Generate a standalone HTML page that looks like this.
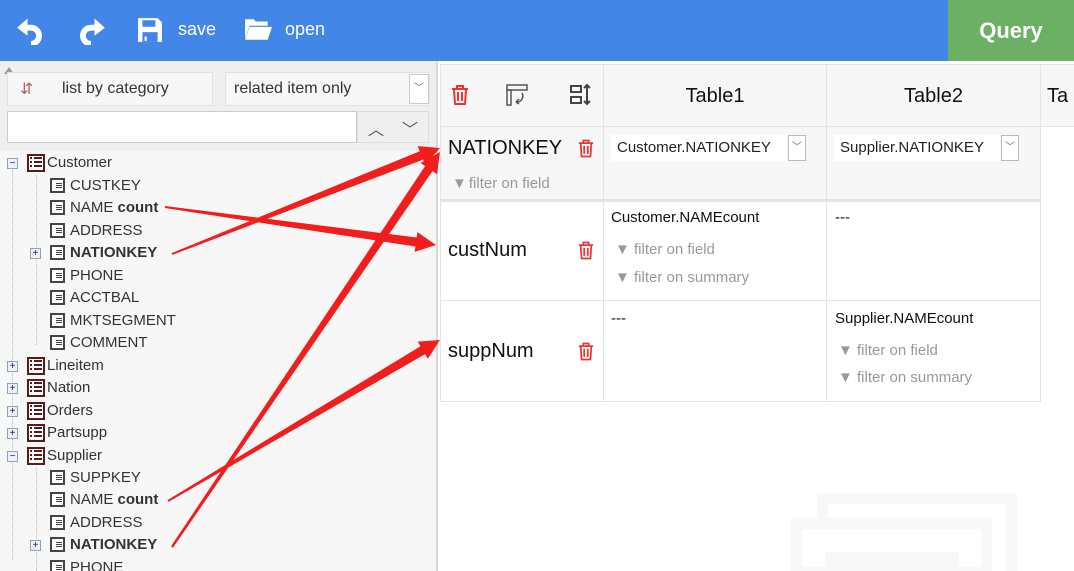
<!DOCTYPE html><html><head><style>
*{box-sizing:border-box;margin:0;padding:0}
html,body{width:1074px;height:571px;overflow:hidden}
body{background:#fff;font-family:"Liberation Sans",sans-serif;position:relative}
.hdr{position:absolute;left:0;top:0;width:1074px;height:61px;background:#4286e8}
.q{position:absolute;left:948px;top:0;width:126px;height:61px;background:#6bb064;color:#fff;font-weight:bold;font-size:22px;text-align:center;line-height:61px}
.ht{position:absolute;color:#fff;font-size:18px;top:19px}
.left{position:absolute;left:0;top:61px;width:438px;height:510px;background:#f7f7f7;border-right:2px solid #d8d8d8}
.lt{position:absolute;left:0;top:0;width:436px;height:90px;background:#efefef}
.box{position:absolute;background:#f7f7f7;border:1px solid #e2e2e2;font-size:16px;color:#333;line-height:32px}
.tr{position:absolute;font-size:15px;color:#333;height:20px;line-height:20px}
.ti{position:absolute;width:18px;height:18px;border:2px solid #5a1a1a;background:#fff}
.ti:before{content:"";position:absolute;left:1px;top:1px;width:12px;height:12px;background:repeating-linear-gradient(#5a1a1a 0 2px,transparent 2px 4px)}
.ti:after{content:"";position:absolute;left:3px;top:0;width:2px;height:14px;background:#fff}
.fi{position:absolute;width:15px;height:15px;border:2px solid #444;background:#fff}
.fi:before{content:"";position:absolute;left:4px;top:3px;width:6px;height:6px;background:repeating-linear-gradient(#444 0 1px,transparent 1px 2px)}
.pm{position:absolute;width:11px;height:11px;border:1px solid #8aa;background:#eef;font-size:10px;line-height:9px;text-align:center;color:#222}
.cell{position:absolute;border-right:1px solid #e4e4e4;border-bottom:1px solid #e4e4e4}
.g{color:#999;font-size:15px;position:absolute}
.sel{position:absolute;background:#fff;font-size:15px;color:#222;height:26px;line-height:26px;padding-left:6px}
.dd{position:absolute;width:18px;height:26px;border:1px solid #bbb;background:#fff;color:#666;font-size:10px;text-align:center;line-height:24px}
</style></head><body>
<div class="hdr"></div>
<svg style="position:absolute;left:16px;top:15px" width="30" height="30" viewBox="0 0 26 26"><path d="M10 3 L1 11 L10 18 Z" fill="#fff"/><path d="M6 11 H13 A7 7 0 0 1 13 25" stroke="#fff" stroke-width="5" fill="none"/></svg>
<svg style="position:absolute;left:76px;top:15px" width="30" height="30" viewBox="0 0 26 26"><path d="M16 3 L25 11 L16 18 Z" fill="#fff"/><path d="M20 11 H13 A7 7 0 0 0 13 25" stroke="#fff" stroke-width="5" fill="none"/></svg>
<svg style="position:absolute;left:137px;top:17px" width="26" height="26" viewBox="0 0 24 24"><path d="M1 1H19L23 5V23H1Z" fill="#fff"/><rect x="5" y="3" width="12" height="6" fill="#4286e8"/><rect x="5" y="14" width="14" height="9" fill="#4286e8"/><rect x="7" y="18" width="2" height="4" fill="#fff"/></svg>
<div class="ht" style="left:178px">save</div>
<svg style="position:absolute;left:244px;top:17px" width="28" height="24" viewBox="0 0 26 22"><path d="M1 2H9L11 4H22V8H5L1 20Z" fill="#fff"/><path d="M5 9H26L22 21H1Z" fill="#fff"/></svg>
<div class="ht" style="left:285px">open</div>
<div class="q">Query</div>

<div class="left">
<div class="lt">
<div style="position:absolute;left:4px;top:6px;width:0;height:0;border:5px solid transparent;border-bottom:7px solid #999;border-top:0"></div>
<div class="box" style="left:7px;top:11px;width:206px;height:34px;padding-left:54px">list by category</div>
<div style="position:absolute;left:20px;top:18px;color:#a66;font-size:16px">⇵</div>
<div class="box" style="left:225px;top:11px;width:205px;height:34px;padding-left:8px">related item only</div>
<div style="position:absolute;left:409px;top:13px;width:20px;height:30px;background:#fff;border:1px solid #ccc;color:#666;font-size:10px;text-align:center;line-height:28px">﹀</div>
<div style="position:absolute;left:7px;top:50px;width:350px;height:32px;background:#fff;border:1px solid #ccc"></div>
<div style="position:absolute;left:357px;top:50px;width:72px;height:32px;border:1px solid #ddd;color:#555;font-size:16px"><span style="position:absolute;left:10px;top:4px">︿</span><span style="position:absolute;left:44px;top:4px">﹀</span></div>
</div>
</div>
<div style="position:absolute;left:12px;top:170px;height:390px;border-left:1px dotted #bbb"></div>
<div style="position:absolute;left:36px;top:175px;height:170px;border-left:1px dotted #bbb"></div>
<div style="position:absolute;left:36px;top:468px;height:103px;border-left:1px dotted #bbb"></div>

<div class="pm" style="left:7px;top:158px">−</div><div class="ti" style="left:27px;top:154px"></div><div class="tr" style="left:47px;top:153px">Customer</div>
<div class="fi" style="left:50px;top:178px"></div><div class="tr" style="left:70px;top:176px">CUSTKEY</div>
<div class="fi" style="left:50px;top:200px"></div><div class="tr" style="left:70px;top:198px">NAME <b>count</b></div>
<div class="fi" style="left:50px;top:223px"></div><div class="tr" style="left:70px;top:221px">ADDRESS</div>
<div class="pm" style="left:30px;top:248px">+</div><div class="fi" style="left:50px;top:245px"></div><div class="tr" style="left:70px;top:243px"><b>NATIONKEY</b></div>
<div class="fi" style="left:50px;top:268px"></div><div class="tr" style="left:70px;top:266px">PHONE</div>
<div class="fi" style="left:50px;top:290px"></div><div class="tr" style="left:70px;top:288px">ACCTBAL</div>
<div class="fi" style="left:50px;top:313px"></div><div class="tr" style="left:70px;top:311px">MKTSEGMENT</div>
<div class="fi" style="left:50px;top:335px"></div><div class="tr" style="left:70px;top:333px">COMMENT</div>
<div class="pm" style="left:7px;top:361px">+</div><div class="ti" style="left:27px;top:357px"></div><div class="tr" style="left:47px;top:356px">Lineitem</div>
<div class="pm" style="left:7px;top:383px">+</div><div class="ti" style="left:27px;top:379px"></div><div class="tr" style="left:47px;top:378px">Nation</div>
<div class="pm" style="left:7px;top:406px">+</div><div class="ti" style="left:27px;top:402px"></div><div class="tr" style="left:47px;top:401px">Orders</div>
<div class="pm" style="left:7px;top:428px">+</div><div class="ti" style="left:27px;top:424px"></div><div class="tr" style="left:47px;top:423px">Partsupp</div>
<div class="pm" style="left:7px;top:451px">−</div><div class="ti" style="left:27px;top:447px"></div><div class="tr" style="left:47px;top:446px">Supplier</div>
<div class="fi" style="left:50px;top:470px"></div><div class="tr" style="left:70px;top:468px">SUPPKEY</div>
<div class="fi" style="left:50px;top:492px"></div><div class="tr" style="left:70px;top:490px">NAME <b>count</b></div>
<div class="fi" style="left:50px;top:515px"></div><div class="tr" style="left:70px;top:513px">ADDRESS</div>
<div class="pm" style="left:30px;top:540px">+</div><div class="fi" style="left:50px;top:537px"></div><div class="tr" style="left:70px;top:535px"><b>NATIONKEY</b></div>
<div class="fi" style="left:50px;top:560px"></div><div class="tr" style="left:70px;top:558px">PHONE</div>

<div style="position:absolute;left:817px;top:493px;width:200px;height:90px;border:11px solid #f8f8f8"></div>
<div style="position:absolute;left:791px;top:518px;width:201px;height:60px;border:11px solid #f8f8f8;background:#fff"></div>
<div style="position:absolute;left:825px;top:552px;width:134px;height:30px;background:#f8f8f8"></div>

<div style="position:absolute;left:440px;top:64px;width:634px;height:338px">
<div class="cell" style="left:0;top:0;width:164px;height:63px;background:#f7f7f7;border-left:1px solid #e4e4e4;border-top:1px solid #e4e4e4"></div>
<div class="cell" style="left:164px;top:0;width:223px;height:63px;background:#f7f7f7;border-top:1px solid #e4e4e4;font-size:20px;text-align:center;line-height:62px;color:#111">Table1</div>
<div class="cell" style="left:387px;top:0;width:214px;height:63px;background:#f7f7f7;border-top:1px solid #e4e4e4;font-size:20px;text-align:center;line-height:62px;color:#111">Table2</div>
<div class="cell" style="left:601px;top:0;width:40px;height:63px;background:#f7f7f7;border-top:1px solid #e4e4e4;font-size:20px;line-height:62px;padding-left:6px;color:#111">Ta</div>
<div class="cell" style="left:0;top:63px;width:164px;height:75px;background:#f7f7f7;border-left:1px solid #e4e4e4;border-bottom:3px solid #e4e4e4"></div>
<div class="cell" style="left:164px;top:63px;width:223px;height:75px;background:#f7f7f7;border-bottom:3px solid #e4e4e4"></div>
<div class="cell" style="left:387px;top:63px;width:214px;height:75px;background:#f7f7f7;border-bottom:3px solid #e4e4e4"></div>
<div class="cell" style="left:0;top:138px;width:164px;height:99px;border-left:1px solid #e4e4e4"></div>
<div class="cell" style="left:164px;top:138px;width:223px;height:99px"></div>
<div class="cell" style="left:387px;top:138px;width:214px;height:99px"></div>
<div class="cell" style="left:0;top:237px;width:164px;height:101px;border-left:1px solid #e4e4e4"></div>
<div class="cell" style="left:164px;top:237px;width:223px;height:101px"></div>
<div class="cell" style="left:387px;top:237px;width:214px;height:101px"></div>
</div>
<svg style="position:absolute;left:451px;top:85px" width="18" height="20" viewBox="0 0 18 20" fill="none" stroke="#e33" stroke-width="2"><path d="M1 4H17M6 4V1H12V4M3 4L4 19H14L15 4M7 7V16M11 7V16"/></svg>
<svg style="position:absolute;left:506px;top:84px" width="22" height="22" viewBox="0 0 22 22" fill="none" stroke="#555" stroke-width="1.5"><rect x="1" y="1" width="20" height="5"/><rect x="1" y="6" width="4" height="15"/><path d="M16 9A6 6 0 0 1 10 18M10 18L13 15M10 18L13 20"/></svg>
<svg style="position:absolute;left:570px;top:84px" width="22" height="22" viewBox="0 0 22 22" fill="none" stroke="#444" stroke-width="2"><rect x="1" y="2" width="10" height="6"/><rect x="1" y="13" width="10" height="6"/><path d="M17 1V20M14 4L17 1L20 4M14 17L17 20L20 17"/></svg>

<div style="position:absolute;left:448px;top:137px;font-size:20px;color:#111">NATIONKEY</div>
<svg style="position:absolute;left:578px;top:139px" width="16" height="19" viewBox="0 0 18 20" fill="none" stroke="#e33" stroke-width="2"><path d="M1 4H17M6 4V1H12V4M3 4L4 19H14L15 4M7 7V16M11 7V16"/></svg>
<div class="g" style="left:452px;top:175px">▼<span style="margin-left:2px">filter on field</span></div>
<div class="sel" style="left:611px;top:135px;width:176px">Customer.NATIONKEY</div><div class="dd" style="left:788px;top:135px">﹀</div>
<div class="sel" style="left:834px;top:135px;width:166px">Supplier.NATIONKEY</div><div class="dd" style="left:1001px;top:135px">﹀</div>

<div style="position:absolute;left:448px;top:239px;font-size:20px;color:#111">custNum</div>
<svg style="position:absolute;left:578px;top:241px" width="16" height="19" viewBox="0 0 18 20" fill="none" stroke="#e33" stroke-width="2"><path d="M1 4H17M6 4V1H12V4M3 4L4 19H14L15 4M7 7V16M11 7V16"/></svg>
<div style="position:absolute;left:611px;top:209px;font-size:15px;color:#111">Customer.NAMEcount</div>
<div class="g" style="left:615px;top:241px">▼ filter on field</div>
<div class="g" style="left:615px;top:269px">▼ filter on summary</div>
<div style="position:absolute;left:835px;top:209px;font-size:15px;color:#111">---</div>

<div style="position:absolute;left:448px;top:340px;font-size:20px;color:#111">suppNum</div>
<svg style="position:absolute;left:578px;top:342px" width="16" height="19" viewBox="0 0 18 20" fill="none" stroke="#e33" stroke-width="2"><path d="M1 4H17M6 4V1H12V4M3 4L4 19H14L15 4M7 7V16M11 7V16"/></svg>
<div style="position:absolute;left:611px;top:310px;font-size:15px;color:#111">---</div>
<div style="position:absolute;left:835px;top:310px;font-size:15px;color:#111">Supplier.NAMEcount</div>
<div class="g" style="left:838px;top:342px">▼ filter on field</div>
<div class="g" style="left:838px;top:369px">▼ filter on summary</div>

<svg style="position:absolute;left:0;top:0" width="1074" height="571">
<g fill="#f21d1d">
<path d="M164.9 208 L415.4 246.5 L414.6 251.9 L436 245 L417.4 232.1 L416.6 237.5 L165.1 206 Z"/>
<path d="M172.4 254.9 L423.1 159.6 L425.1 164.7 L440 148 L417.7 146.1 L419.7 151.2 L171.6 253.1 Z"/>
<path d="M168.5 501.9 L425.1 354.1 L427.9 358.8 L440 340 L417.7 341.6 L420.5 346.3 L167.5 500.1 Z"/>
<path d="M173 547.7 L432.5 171.1 L437.1 174.2 L440 152 L420.5 163 L425.1 166.1 L171 546.3 Z"/>
</g></svg>
</body></html>
